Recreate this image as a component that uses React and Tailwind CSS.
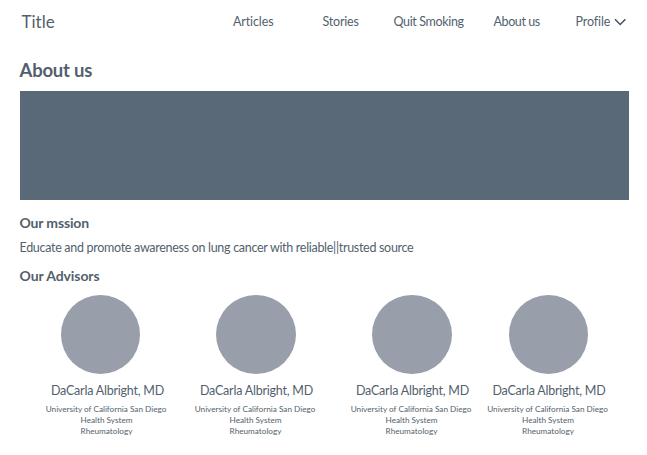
import React from "react";

const advisors = [
  { column: "ml-[45.5px]", circle: "ml-[15px]" },
  { column: "ml-[28px]", circle: "ml-[21.5px]" },
  { column: "ml-[35px]", circle: "ml-[21.5px]" },
  { column: "ml-[15.5px]", circle: "ml-[21.5px]" },
];

function Header() {
  return (
    <header className="flex h-[44px] items-center whitespace-nowrap">
      <div className="ml-[21.5px] w-[211.5px] text-[17px] leading-5">Title</div>
      <nav className="flex items-center text-[12.5px] leading-4">
        <a className="w-[89.5px] tracking-[-0.12px]">Articles</a>
        <a className="w-[71px] tracking-[-0.2px]">Stories</a>
        <a className="w-[100px] tracking-[-0.35px]">Quit Smoking</a>
        <a className="w-[82px] tracking-[-0.4px]">About us</a>
        <a className="flex w-[60px] items-center">
          <span className="w-[38px] tracking-[-0.1px]">Profile</span>
          <svg className="-mt-px" width="13" height="8" viewBox="0 0 13 8" fill="none" stroke="#444b54" strokeWidth="1.4">
            <path d="M1 1.2L6.2 6.6L11.4 1.2" />
          </svg>
        </a>
      </nav>
    </header>
  );
}

function Advisor({ column, circle }) {
  return (
    <article className={`${column} w-[121px] shrink-0 whitespace-nowrap`}>
      <div className={`${circle} h-[79px] w-[79.5px] rounded-[50%] bg-[#989fab]`} />
      <div className="mt-[9px] flex justify-center pl-[3px] text-[12.5px] leading-4 tracking-[-0.22px]">DaCarla Albright, MD</div>
      <div className="mt-[5px] flex flex-col items-center text-[8.2px] leading-[10.8px]">
        <span>University of California San Diego</span>
        <span className="pl-px">Health System</span>
        <span className="pl-px">Rheumatology</span>
      </div>
    </article>
  );
}

export default function App() {
  return (
    <div className="h-[455px] w-[647px] overflow-hidden bg-white font-['Lato',sans-serif] text-[#535f6d]">
      <Header />
      <main>
        <h1 className="ml-[19.5px] mt-[14px] text-[18.5px] font-bold leading-6 tracking-[-0.2px]">About us</h1>
        <div className="ml-[19.5px] mt-[9px] h-[108.5px] w-[609.5px] bg-[#5a6978]" />
        <h2 className="ml-[19.5px] mt-[14px] text-[14px] font-bold leading-[18px] tracking-[-0.15px]">Our mssion</h2>
        <p className="ml-[19.5px] mt-[8.5px] whitespace-nowrap text-[12.5px] leading-4 tracking-[-0.3px]">
          Educate and promote awareness on lung cancer with reliable||trusted source
        </p>
        <h2 className="ml-[19.5px] mt-[11px] text-[14px] font-bold leading-[18px] tracking-[-0.08px]">Our Advisors</h2>
        <section className="mt-[10px] flex">
          {advisors.map((advisor, i) => (
            <Advisor key={i} {...advisor} />
          ))}
        </section>
      </main>
    </div>
  );
}
